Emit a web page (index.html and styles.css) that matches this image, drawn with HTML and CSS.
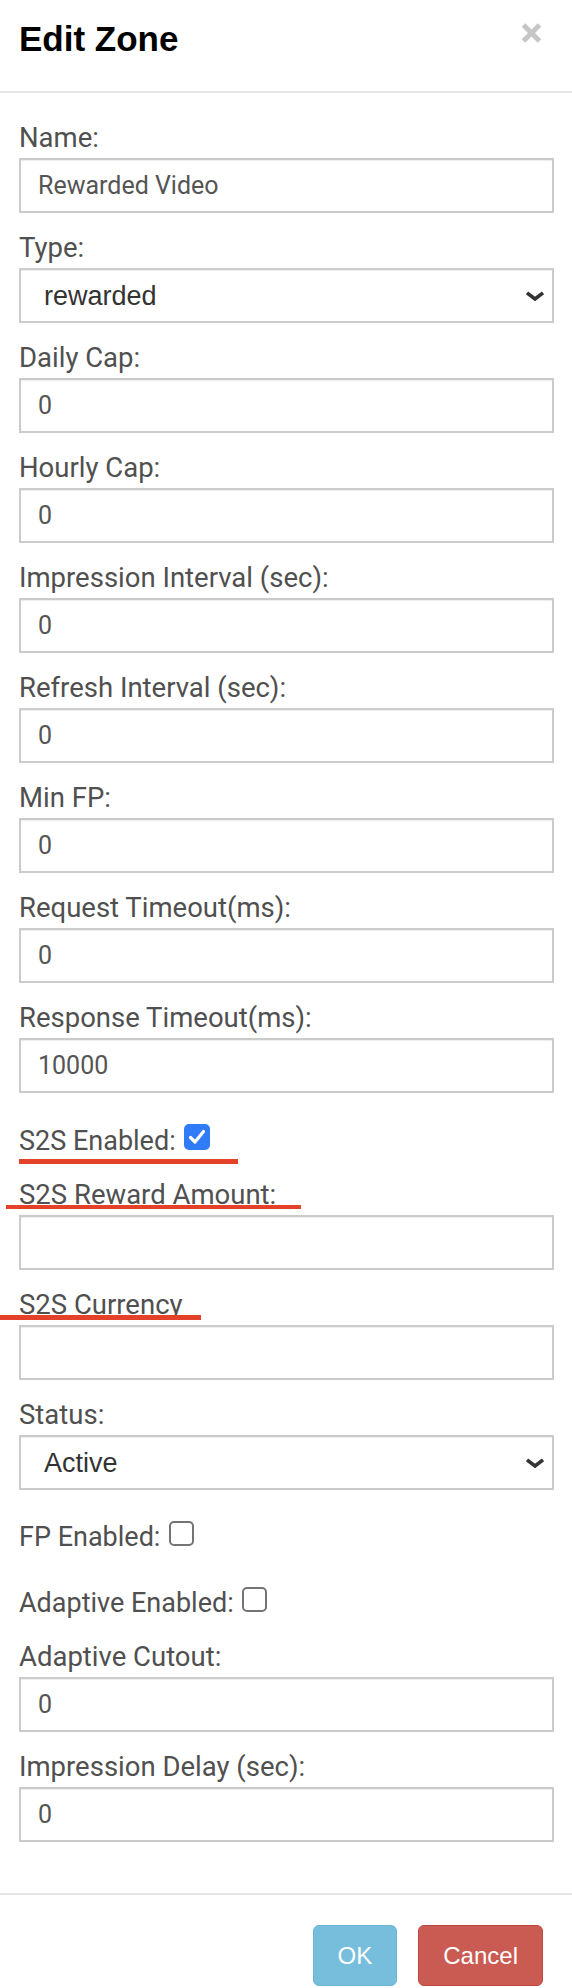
FILE: index.html
```html
<!DOCTYPE html>
<html lang="en">
<head>
<meta charset="utf-8">
<title>Edit Zone</title>
<link rel="stylesheet" href="styles.css">
</head>
<body>
<div class="modal">
  <header class="modal-header">
    <h1 class="title">Edit Zone</h1>
    <button class="close" type="button" aria-label="Close">
      <svg width="21" height="20" viewBox="0 0 21 20"><path d="M2.5 2 L18.5 18 M18.5 2 L2.5 18" stroke="#c6c6c6" stroke-width="5" fill="none"/></svg>
    </button>
  </header>
  <form class="modal-body">
    <div class="field"><label class="lbl">Name:</label><input class="ctl" value="Rewarded Video"></div>
    <div class="field"><label class="lbl">Type:</label>
      <div class="select-wrap"><select class="ctl sel"><option>rewarded</option></select>
        <svg class="chev" viewBox="0 0 20 10"><path d="M2 1.8 L10 8 L18 1.8" stroke="#333" stroke-width="3.6" fill="none" stroke-linejoin="miter"/></svg></div></div>
    <div class="field"><label class="lbl">Daily Cap:</label><input class="ctl" value="0"></div>
    <div class="field"><label class="lbl">Hourly Cap:</label><input class="ctl" value="0"></div>
    <div class="field"><label class="lbl">Impression Interval (sec):</label><input class="ctl" value="0"></div>
    <div class="field"><label class="lbl">Refresh Interval (sec):</label><input class="ctl" value="0"></div>
    <div class="field"><label class="lbl">Min FP:</label><input class="ctl" value="0"></div>
    <div class="field"><label class="lbl">Request Timeout(ms):</label><input class="ctl" value="0"></div>
    <div class="field"><label class="lbl">Response Timeout(ms):</label><input class="ctl" value="10000"></div>
    <div class="field check-row">S2S Enabled: <span class="cb cb-on"><svg width="26" height="26" viewBox="0 0 26 26"><path d="M6.5 13.5 L11 18 L19.5 7.5" stroke="#fff" stroke-width="3.2" fill="none" stroke-linecap="round" stroke-linejoin="round"/></svg></span><i class="mark mark-1"></i></div>
    <div class="field"><label class="lbl">S2S Reward Amount:</label><input class="ctl" value=""><i class="mark mark-2"></i></div>
    <div class="field"><label class="lbl">S2S Currency</label><input class="ctl" value=""><i class="mark mark-3"></i></div>
    <div class="field"><label class="lbl">Status:</label>
      <div class="select-wrap"><select class="ctl sel"><option>Active</option></select>
        <svg class="chev" viewBox="0 0 20 10"><path d="M2 1.8 L10 8 L18 1.8" stroke="#333" stroke-width="3.6" fill="none"/></svg></div></div>
    <div class="field check-row">FP Enabled: <span class="cb cb-off"></span></div>
    <div class="field check-row">Adaptive Enabled: <span class="cb cb-off"></span></div>
    <div class="field"><label class="lbl">Adaptive Cutout:</label><input class="ctl" value="0"></div>
    <div class="field"><label class="lbl">Impression Delay (sec):</label><input class="ctl" value="0"></div>
  </form>
  <footer class="modal-footer">
    <button class="btn btn-ok" type="button">OK</button>
    <button class="btn btn-cancel" type="button">Cancel</button>
  </footer>
</div>
</body>
</html>
```
FILE: styles.css
```css
html, body {
  margin: 0;
  padding: 0;
  overflow: hidden;
  background: #fff;
}
body {
  font-family: Roboto, "Liberation Sans", sans-serif;
}
.modal {
  width: 572px;
}
.modal-header {
  display: flex;
  justify-content: space-between;
  align-items: flex-start;
  padding: 19px 30px 32px 19px;
  border-bottom: 2px solid #e5e5e5;
}
.title {
  margin: 0;
  font: bold 35px/40px "Liberation Sans", Arial, sans-serif;
  color: #000;
}
.close {
  display: block;
  border: 0;
  background: none;
  padding: 0;
  margin-top: 4px;
  width: 21px;
  height: 20px;
}
.close svg {
  display: block;
}
.modal-body {
  padding: 29px 18px 32px 19px;
}
.field {
  position: relative;
  margin-bottom: 19px;
}
.lbl {
  display: block;
  font-size: 27.5px;
  line-height: 32px;
  color: #505050;
  margin-bottom: 4px;
}
.ctl {
  display: block;
  width: 100%;
  height: 55px;
  box-sizing: border-box;
  margin: 0;
  border: 2px solid #cbcbcb;
  border-radius: 0;
  padding: 0 17px;
  font: 25px Roboto, sans-serif;
  color: #555;
  background: #fff;
  box-shadow: inset 0 1px 1px rgba(0, 0, 0, 0.075);
  outline: none;
}
.select-wrap {
  position: relative;
}
.sel {
  -webkit-appearance: none;
  appearance: none;
  font: 27px "Liberation Sans", Arial, sans-serif;
  color: #333;
  padding-left: 23px;
}
.chev {
  position: absolute;
  right: 9px;
  top: 23px;
  width: 20px;
  height: 10px;
  pointer-events: none;
}
.check-row {
  padding: 12px 0 3px;
  font-size: 27px;
  line-height: 32px;
  color: #505050;
}
.cb {
  display: inline-block;
  overflow: hidden;
  vertical-align: baseline;
  box-sizing: border-box;
  margin-left: 2px;
}
.cb-on {
  width: 26px;
  height: 26px;
  border-radius: 5px;
  background: #2f7cf6;
}
.cb-on svg {
  display: block;
}
.cb-off {
  width: 25px;
  height: 25px;
  border: 2px solid #747474;
  border-radius: 5px;
  background: #fff;
}
.mark {
  position: absolute;
  background: #e4412b;
}
.mark-1 {
  left: 0;
  top: 47px;
  width: 219px;
  height: 5px;
}
.mark-2 {
  left: -13px;
  top: 26px;
  width: 295px;
  height: 4px;
}
.mark-3 {
  left: -19px;
  top: 26px;
  width: 201px;
  height: 5px;
}
.modal-footer {
  display: flex;
  justify-content: flex-end;
  gap: 21px;
  padding: 30px 29px 3px;
  border-top: 2px solid #e5e5e5;
}
.btn {
  font: 24px/25px "Liberation Sans", Arial, sans-serif;
  color: #fff;
  padding: 17px 24px;
  border: 1px solid;
  border-radius: 6px;
  margin: 0;
}
.btn-ok {
  background: #77bedc;
  border-color: #6bb6d6;
}
.btn-cancel {
  background: #c95b53;
  border-color: #bf473f;
}
```
